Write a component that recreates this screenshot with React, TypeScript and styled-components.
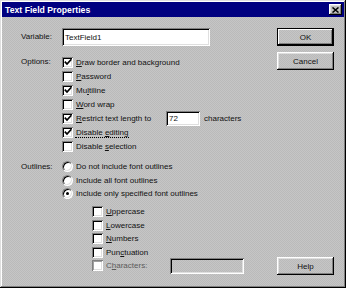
import styled, { createGlobalStyle, css } from 'styled-components';

const GlobalStyle = createGlobalStyle`
  html, body {
    margin: 0;
    padding: 0;
    background: #c0c0c0;
  }
  body {
    font-family: 'Liberation Sans', Arial, sans-serif;
    font-size: 8px;
    color: #111;
  }
`;

const dither = css`
  background-color: #c0c0c0;
  background-image: repeating-conic-gradient(#c6c6c6 0 25%, #bababa 0 50%);
  background-size: 2px 2px;
`;

const raised = css`
  box-shadow: inset -1px -1px #000, inset 1px 1px #fff, inset -2px -2px #808080,
    inset 2px 2px #dfdfdf;
`;

const sunken = css`
  box-shadow: inset 1px 1px #808080, inset -1px -1px #fff, inset 2px 2px #000,
    inset -2px -2px #dfdfdf;
`;

const Window = styled.div`
  ${dither};
  width: 346px;
  height: 288px;
  box-sizing: border-box;
  padding: 2px;
  display: flex;
  flex-direction: column;
  box-shadow: inset -1px -1px #000, inset 1px 1px #dfdfdf, inset -2px -2px #808080,
    inset 2px 2px #fff;
`;

const TitleBar = styled.div`
  height: 15px;
  background: #000080;
  display: flex;
  align-items: center;
  justify-content: space-between;
  padding: 0 2px 0 3px;
`;

const TitleText = styled.span`
  color: #fff;
  font-weight: bold;
  font-size: 8.7px;
`;

const CloseButton = styled.div`
  ${raised};
  background: #c0c0c0;
  width: 13px;
  height: 11px;
  display: flex;
  align-items: center;
  justify-content: center;
`;

const Body = styled.div`
  flex: 1;
  display: flex;
  padding: 11px 10px 11px 19px;
`;

const Main = styled.div`
  flex: 1;
  display: flex;
  flex-direction: column;
`;

const Section = styled.div<{ $top?: number }>`
  display: flex;
  align-items: flex-start;
  margin-top: ${(p) => p.$top ?? 0}px;
`;

const Label = styled.div<{ $h: number }>`
  width: 41px;
  flex-shrink: 0;
  line-height: ${(p) => p.$h}px;
`;

const List = styled.div<{ $indent?: number; $top?: number }>`
  display: flex;
  flex-direction: column;
  margin-left: ${(p) => p.$indent ?? 0}px;
  margin-top: ${(p) => p.$top ?? 0}px;
`;

const Row = styled.div<{ $h: number }>`
  height: ${(p) => p.$h}px;
  display: flex;
  align-items: center;
  white-space: nowrap;
`;

const Box = styled.div<{ $disabled?: boolean }>`
  ${sunken};
  ${(p) =>
    p.$disabled &&
    css`
      box-shadow: inset 1px 1px #808080, inset -1px -1px #fff, inset 2px 2px #a0a0a0,
        inset -2px -2px #dfdfdf;
    `}
  width: 11px;
  height: 11px;
  flex-shrink: 0;
  background: #fff;
  margin-right: 2px;
  display: flex;
  align-items: center;
  justify-content: center;
`;

const Radio = styled.div<{ $on?: boolean }>`
  width: 11px;
  height: 11px;
  flex-shrink: 0;
  box-sizing: border-box;
  border-radius: 50%;
  background: #fff;
  border: 1px solid;
  border-color: #808080 #fff #fff #808080;
  box-shadow: inset 1px 1px #000, inset -1px -1px #dfdfdf;
  margin-right: 2px;
  display: flex;
  align-items: center;
  justify-content: center;
  &::after {
    content: '';
    display: ${(p) => (p.$on ? 'block' : 'none')};
    width: 3px;
    height: 3px;
    border-radius: 50%;
    background: #000;
  }
`;

const Caption = styled.span<{ $focus?: boolean; $disabled?: boolean; $w?: number }>`
  padding: 0 1px;
  border-bottom: 1px dotted ${(p) => (p.$focus ? '#000' : 'transparent')};
  margin-bottom: -1px;
  width: ${(p) => (p.$w ? `${p.$w}px` : 'auto')};
  color: ${(p) => (p.$disabled ? '#5a5a5a' : '#111')};
`;

const Key = styled.span`
  text-decoration: underline;
`;

const Field = styled.div<{ $w: number; $h: number; $disabled?: boolean }>`
  ${sunken};
  width: ${(p) => p.$w}px;
  height: ${(p) => p.$h}px;
  flex-shrink: 0;
  box-sizing: border-box;
  background: ${(p) => (p.$disabled ? 'transparent' : '#fff')};
  padding: 0 3px;
  display: flex;
  align-items: center;
`;

const After = styled.span`
  margin-left: 4px;
`;

const Side = styled.div`
  width: 57px;
  display: flex;
  flex-direction: column;
  gap: 6px;
`;

const Button = styled.div<{ $default?: boolean; $push?: boolean }>`
  ${raised};
  ${(p) =>
    p.$default &&
    css`
      box-shadow: inset 0 0 0 1px #000, inset -2px -2px #000, inset 2px 2px #fff,
        inset -3px -3px #808080;
    `}
  height: 18px;
  display: flex;
  align-items: center;
  justify-content: center;
  margin-top: ${(p) => (p.$push ? 'auto' : '0')};
`;

const Check = () => (
  <svg width="8" height="8" viewBox="0 0 8 8">
    <path d="M0.8 3.6 L3 6 L7.4 1.2" fill="none" stroke="#000" strokeWidth="1.7" />
  </svg>
);

const CloseX = () => (
  <svg width="7" height="6" viewBox="0 0 7 6">
    <path d="M0.5 0.5 L6.5 5.5 M6.5 0.5 L0.5 5.5" stroke="#000" strokeWidth="1.5" />
  </svg>
);

type Opt = { pre?: string; key: string; post: string; on?: boolean; focus?: boolean };

const options: Opt[] = [
  { key: 'D', post: 'raw border and background', on: true },
  { key: 'P', post: 'assword' },
  { pre: 'Mu', key: 'l', post: 'tiline', on: true },
  { key: 'W', post: 'ord wrap' },
];

const subs: Opt[] = [
  { key: 'U', post: 'ppercase' },
  { key: 'L', post: 'owercase' },
  { key: 'N', post: 'umbers' },
  { pre: 'Pun', key: 'c', post: 'tuation' },
];

const Text = ({ o }: { o: Opt }) => (
  <Caption $focus={o.focus}>
    {o.pre}
    <Key>{o.key}</Key>
    {o.post}
  </Caption>
);

const App = () => {
  return (
    <>
      <GlobalStyle />
      <Window>
        <TitleBar>
          <TitleText>Text Field Properties</TitleText>
          <CloseButton>
            <CloseX />
          </CloseButton>
        </TitleBar>
        <Body>
          <Main>
            <Section>
              <Label $h={18}>Variable:</Label>
              <Field $w={148} $h={18}>TextField1</Field>
            </Section>

            <Section $top={9}>
              <Label $h={14}>Options:</Label>
              <List>
                {options.map((o) => (
                  <Row $h={14} key={o.post}>
                    <Box>{o.on && <Check />}</Box>
                    <Text o={o} />
                  </Row>
                ))}
                <Row $h={14}>
                  <Box>
                    <Check />
                  </Box>
                  <Caption $w={89}>
                    <Key>R</Key>estrict text length to
                  </Caption>
                  <Field $w={34} $h={15}>72</Field>
                  <After>characters</After>
                </Row>
                <Row $h={14}>
                  <Box>
                    <Check />
                  </Box>
                  <Caption $focus>
                    Disable <Key>e</Key>diting
                  </Caption>
                </Row>
                <Row $h={14}>
                  <Box />
                  <Text o={{ pre: 'Disable ', key: 's', post: 'election' }} />
                </Row>
              </List>
            </Section>

            <Section $top={7}>
              <Label $h={13.5}>Outlines:</Label>
              <List>
                <Row $h={13.5}>
                  <Radio />
                  <Caption>Do not include font outlines</Caption>
                </Row>
                <Row $h={13.5}>
                  <Radio />
                  <Caption>Include all font outlines</Caption>
                </Row>
                <Row $h={13.5}>
                  <Radio $on />
                  <Caption>Include only specified font outlines</Caption>
                </Row>
                <List $indent={30} $top={4.5}>
                  {subs.map((o) => (
                    <Row $h={13.5} key={o.post}>
                      <Box />
                      <Text o={o} />
                    </Row>
                  ))}
                  <Row $h={13.5}>
                    <Box $disabled />
                    <Caption $disabled $w={63}>
                      C<Key>h</Key>aracters:
                    </Caption>
                    <Field $w={74} $h={16} $disabled />
                  </Row>
                </List>
              </List>
            </Section>
          </Main>

          <Side>
            <Button $default>OK</Button>
            <Button>Cancel</Button>
            <Button $push>Help</Button>
          </Side>
        </Body>
      </Window>
    </>
  );
};

export default App;
